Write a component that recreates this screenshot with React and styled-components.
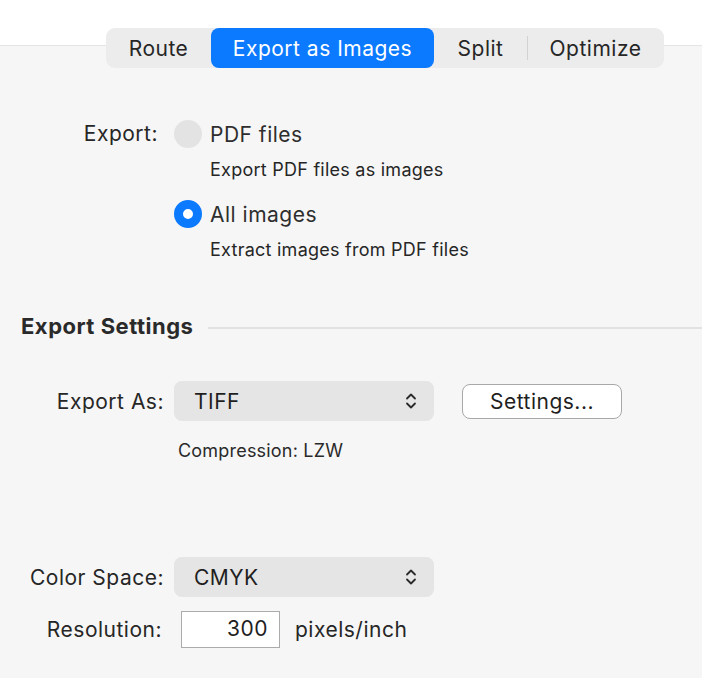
import React from "react";
import styled, { createGlobalStyle } from "styled-components";

const GlobalStyle = createGlobalStyle`
  html, body {
    margin: 0;
    padding: 0;
  }
  body {
    width: 702px;
    height: 678px;
    overflow: hidden;
    font-family: Inter, "Noto Sans", "Liberation Sans", sans-serif;
    color: #262626;
    background: linear-gradient(
      to bottom,
      #ffffff 0px,
      #ffffff 45px,
      #e4e4e4 45px,
      #e4e4e4 46px,
      #f6f6f6 46px
    );
  }
`;

const tabs = [
  { label: "Route", width: 105 },
  { label: "Export as Images", width: 223, active: true },
  { label: "Split", width: 93 },
  { label: "Optimize", width: 137, divider: true },
];

const Chevrons = () => (
  <svg width="12" height="18" viewBox="0 0 12 18" fill="none">
    <path
      d="M2 6.5 L6 2.5 L10 6.5 M2 11.5 L6 15.5 L10 11.5"
      stroke="#2a2a2a"
      strokeWidth="1.8"
      strokeLinecap="round"
      strokeLinejoin="round"
    />
  </svg>
);

const App = () => {
  return (
    <Page>
      <GlobalStyle />
      <TabBar>
        {tabs.map((t) => (
          <React.Fragment key={t.label}>
            {t.divider && <TabDivider />}
            <Tab $active={t.active} $width={t.width}>
              {t.label}
            </Tab>
          </React.Fragment>
        ))}
      </TabBar>

      <ExportGroup>
        <ExportLabel>Export:</ExportLabel>
        <Options>
          <Option>
            <RadioRow>
              <Radio />
              <RadioText>PDF files</RadioText>
            </RadioRow>
            <Hint>Export PDF files as images</Hint>
          </Option>
          <Option>
            <RadioRow>
              <Radio $checked />
              <RadioText>All images</RadioText>
            </RadioRow>
            <Hint>Extract images from PDF files</Hint>
          </Option>
        </Options>
      </ExportGroup>

      <SectionHeader>
        <SectionTitle>Export Settings</SectionTitle>
        <SectionLine />
      </SectionHeader>

      <FormRow $top={42}>
        <FieldLabel>Export As:</FieldLabel>
        <Select>
          <span>TIFF</span>
          <Chevrons />
        </Select>
        <Button>Settings...</Button>
      </FormRow>
      <Note>Compression: LZW</Note>

      <FormRow $top={95}>
        <FieldLabel>Color Space:</FieldLabel>
        <Select>
          <span>CMYK</span>
          <Chevrons />
        </Select>
      </FormRow>

      <FormRow $top={14}>
        <FieldLabel $width={162} $gap={19}>
          Resolution:
        </FieldLabel>
        <NumberBox>300</NumberBox>
        <Unit>pixels/inch</Unit>
      </FormRow>
    </Page>
  );
};

export default App;

const Page = styled.div`
  display: flex;
  flex-direction: column;
  padding-top: 28px;
`;

const TabBar = styled.div`
  display: flex;
  align-items: center;
  align-self: flex-start;
  margin-left: 106px;
  height: 40px;
  border-radius: 9px;
  background: #ececec;
`;

const Tab = styled.div`
  display: flex;
  align-items: center;
  justify-content: center;
  width: ${(p) => p.$width}px;
  height: 40px;
  border-radius: 8px;
  font-size: 21px;
  letter-spacing: 0.5px;
  background: ${(p) => (p.$active ? "#0b7aff" : "transparent")};
  color: ${(p) => (p.$active ? "#ffffff" : "#262626")};
`;

const TabDivider = styled.div`
  width: 1px;
  height: 24px;
  margin-right: -1px;
  background: #d2d2d2;
`;

const ExportGroup = styled.div`
  display: flex;
  align-items: flex-start;
  margin-top: 52px;
`;

const ExportLabel = styled.div`
  width: 158px;
  text-align: right;
  margin-right: 16px;
  font-size: 21px;
  letter-spacing: 0.5px;
  line-height: 28px;
`;

const Options = styled.div`
  display: flex;
  flex-direction: column;
  gap: 19px;
`;

const Option = styled.div`
  display: flex;
  flex-direction: column;
  gap: 11px;
`;

const RadioRow = styled.div`
  display: flex;
  align-items: center;
  gap: 8px;
  height: 28px;
`;

const Radio = styled.div`
  width: 28px;
  height: 28px;
  border-radius: 50%;
  box-sizing: border-box;
  background: ${(p) => (p.$checked ? "#ffffff" : "#e3e3e3")};
  border: ${(p) => (p.$checked ? "9px solid #0b7aff" : "none")};
`;

const RadioText = styled.span`
  font-size: 21px;
  letter-spacing: 0.5px;
  color: #2e2e2e;
`;

const Hint = styled.div`
  margin-left: 36px;
  font-size: 18px;
  letter-spacing: 0.25px;
  line-height: 22px;
  color: #262626;
`;

const SectionHeader = styled.div`
  display: flex;
  align-items: center;
  gap: 15px;
  margin-top: 52px;
  padding-left: 21px;
`;

const SectionTitle = styled.div`
  font-size: 22px;
  font-weight: 700;
  letter-spacing: 0.5px;
  line-height: 26px;
  color: #2a2a2a;
  white-space: nowrap;
`;

const SectionLine = styled.div`
  flex: 1;
  height: 2px;
  margin-top: 4px;
  background: #e2e2e2;
`;

const FormRow = styled.div`
  display: flex;
  align-items: center;
  margin-top: ${(p) => p.$top}px;
`;

const FieldLabel = styled.div`
  width: ${(p) => p.$width || 164}px;
  margin-right: ${(p) => p.$gap || 10}px;
  text-align: right;
  font-size: 21px;
  letter-spacing: 0.5px;
  color: #262626;
  white-space: nowrap;
`;

const Select = styled.div`
  display: flex;
  align-items: center;
  justify-content: space-between;
  box-sizing: border-box;
  width: 260px;
  height: 40px;
  padding: 0 17px 0 20px;
  border-radius: 8px;
  background: #e5e5e5;
  font-size: 21px;
  letter-spacing: 0.5px;
  color: #1f1f1f;
`;

const Button = styled.div`
  display: flex;
  align-items: center;
  justify-content: center;
  box-sizing: border-box;
  width: 160px;
  height: 35px;
  margin-left: 28px;
  border: 1px solid #a8a8a8;
  border-radius: 8px;
  background: #ffffff;
  font-size: 21px;
  letter-spacing: 0.5px;
  color: #1f1f1f;
`;

const Note = styled.div`
  margin: 19px 0 0 178px;
  font-size: 18px;
  letter-spacing: 0.2px;
  line-height: 22px;
  color: #2a2a2a;
`;

const NumberBox = styled.div`
  box-sizing: border-box;
  width: 99px;
  height: 37px;
  padding: 0 11px;
  border: 1.5px solid #ababab;
  background: #ffffff;
  text-align: right;
  font-size: 21px;
  letter-spacing: 0.5px;
  line-height: 34px;
  color: #1f1f1f;
`;

const Unit = styled.span`
  margin-left: 15px;
  font-size: 21px;
  letter-spacing: 0.5px;
  color: #262626;
`;
